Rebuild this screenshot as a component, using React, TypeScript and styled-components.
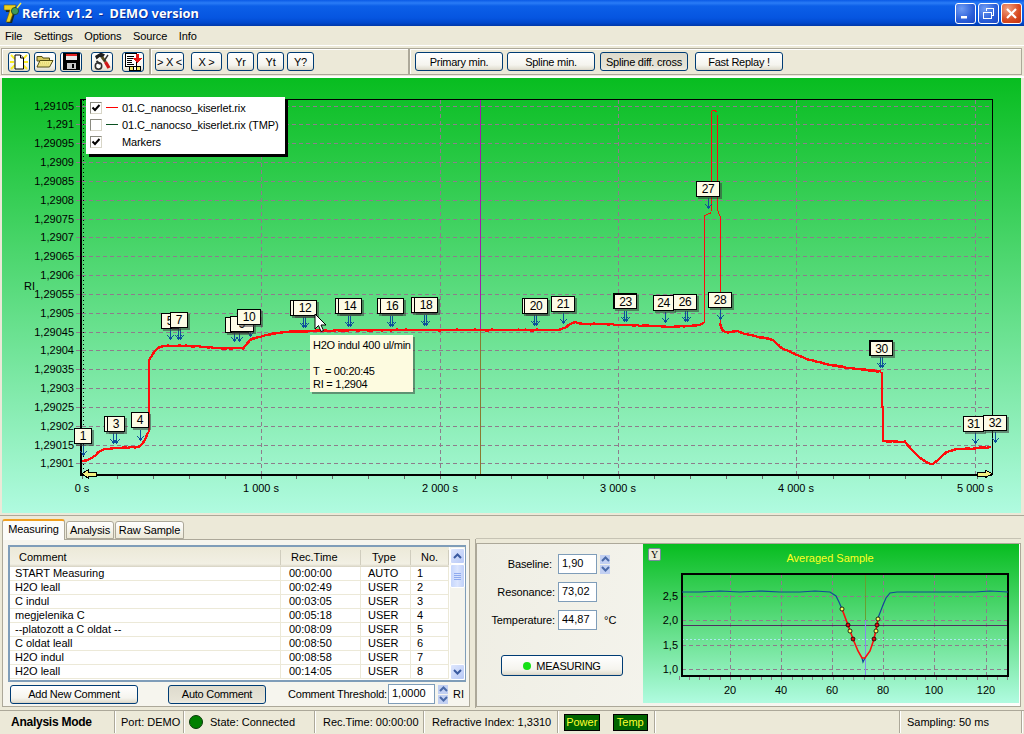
import styled, { createGlobalStyle } from "styled-components";

const UI_FONT = `"Liberation Sans", Arial, sans-serif`;

const GlobalStyle = createGlobalStyle`
  html, body { margin: 0; padding: 0; background: #ece9d8; }
  body { font-family: ${UI_FONT}; font-size: 11px; color: #000; }
  #root { width: 1024px; height: 734px; overflow: hidden; }
`;

const Window = styled.div`
  width: 1024px;
  height: 734px;
  display: flex;
  flex-direction: column;
  background: #ece9d8;
`;

/* ---------- title bar ---------- */
const TitleBar = styled.div`
  height: 26px;
  flex: none;
  display: flex;
  align-items: center;
  padding: 0 2px 0 2px;
  background: linear-gradient(#0a5ae6 0, #2a7cf6 3px, #0c5fe8 6px, #0655e0 18px, #0048cc 23px, #0038a8 26px);
`;

const TitleText = styled.div`
  margin-left: 0;
  flex: 1;
  color: #fff;
  font: bold 12.8px "Noto Sans", sans-serif;
  white-space: pre;
  text-shadow: 1px 1px 0 #0a2a90;
`;

const WinButton = styled.div<{ $close?: boolean }>`
  width: 21px;
  height: 21px;
  margin-left: 2px;
  box-sizing: border-box;
  border: 1px solid #fff;
  border-radius: 3px;
  display: flex;
  align-items: center;
  justify-content: center;
  background: ${(p) =>
    p.$close
      ? "radial-gradient(circle at 30% 25%, #f0a080, #d84a20 60%, #c03010)"
      : "radial-gradient(circle at 30% 25%, #6f9cf4, #2a5ed8 60%, #1c48c4)"};
`;

/* ---------- menu ---------- */
const MenuBar = styled.div`
  height: 19px;
  flex: none;
  display: flex;
  align-items: center;
  padding-left: 5px;
  gap: 11.5px;
`;

const MenuItem = styled.span`
  font-size: 11px;
  letter-spacing: -0.1px;
`;

/* ---------- toolbar ---------- */
const Toolbar = styled.div`
  height: 33px;
  flex: none;
  box-sizing: border-box;
  border-top: 1px solid #fff;
  border-bottom: 2px solid #fff;
  padding: 2px 2px 1px 1px;
  display: flex;
`;

const ToolGroup = styled.div<{ $w?: number; $pad?: number }>`
  box-sizing: border-box;
  width: ${(p) => (p.$w ? `${p.$w}px` : "auto")};
  flex: ${(p) => (p.$w ? "none" : "1")};
  height: 27px;
  border: 1px solid #aca899;
  box-shadow: inset 1px 1px 0 #fff;
  display: flex;
  align-items: center;
  padding-left: ${(p) => p.$pad ?? 6}px;
`;

const XpButton = styled.button<{ $w: number; $h?: number; $pressed?: boolean; $ml?: number }>`
  width: ${(p) => p.$w}px;
  height: ${(p) => p.$h ?? 19}px;
  margin: 0 0 0 ${(p) => p.$ml ?? 0}px;
  padding: 0;
  flex: none;
  box-sizing: border-box;
  border: 1px solid #003c74;
  border-radius: 3px;
  font: 11px ${UI_FONT};
  letter-spacing: -0.25px;
  color: #000;
  display: flex;
  align-items: center;
  justify-content: center;
  gap: 5px;
  background: ${(p) =>
    p.$pressed
      ? "linear-gradient(#dedbcd, #e6e3d6 80%, #eeece2)"
      : "linear-gradient(#fff, #f5f4ee 70%, #e4e1d4 92%, #d6d0c4)"};
`;

/* ---------- main chart ---------- */
const ChartPanel = styled.div`
  position: relative;
  height: 435px;
  flex: none;
  margin: 0 3px 0 2px;
  background: linear-gradient(#08bd20, #b0fbe0);
  overflow: hidden;
`;

const ChartSvg = styled.svg`
  display: block;
  width: 100%;
  height: 100%;
`;

const AxisText = styled.text`
  font: 11px ${UI_FONT};
  fill: #000;
`;

const Legend = styled.div`
  position: absolute;
  left: 84px;
  top: 19px;
  width: 199px;
  height: 57px;
  box-sizing: border-box;
  background: #fff;
  box-shadow: 3px 3px 0 #000;
  padding: 2px 0 0 4px;
  letter-spacing: -0.12px;
`;

const LegendRow = styled.div`
  height: 17px;
  display: flex;
  align-items: center;
`;

const CheckBox = styled.span`
  width: 12px;
  height: 12px;
  flex: none;
  box-sizing: border-box;
  border: 1px solid #8a8a80;
  border-right-color: #d8d6c8;
  border-bottom-color: #d8d6c8;
  background: #fff;
  display: flex;
  align-items: center;
  justify-content: center;
`;

const LegendLine = styled.span<{ $color?: string }>`
  width: 12px;
  height: 1px;
  flex: none;
  margin: 0 4px 0 4px;
  background: ${(p) => p.$color ?? "transparent"};
`;

const Marker = styled.div<{ $x: number; $y: number; $w: number; $bold?: boolean }>`
  position: absolute;
  left: ${(p) => p.$x - 2}px;
  top: ${(p) => p.$y - 78}px;
  width: ${(p) => p.$w}px;
  height: 16px;
  box-sizing: border-box;
  background: #fdfbe6;
  border: 1px solid #000;
  border-top-width: ${(p) => (p.$bold ? 2 : 1)}px;
  border-left-width: ${(p) => (p.$bold ? 2 : 1)}px;
  box-shadow: 2px 2px 0 rgba(60, 60, 60, 0.55);
  font: 12px/14px ${UI_FONT};
  letter-spacing: -0.3px;
  text-align: center;
  overflow: hidden;
`;

const Tooltip = styled.div`
  position: absolute;
  left: 308px;
  top: 257px;
  width: 103px;
  height: 57px;
  box-sizing: border-box;
  padding: 4px 0 0 3px;
  background: #fdfbe0;
  box-shadow: 2px 2px 0 rgba(60, 60, 60, 0.5);
  font: 11px/13px ${UI_FONT};
  letter-spacing: -0.25px;
  white-space: pre;
`;

const CursorIcon = styled.svg`
  position: absolute;
  left: 312px;
  top: 235px;
`;

/* ---------- bottom area ---------- */
const BottomArea = styled.div`
  height: 195px;
  flex: none;
  box-sizing: border-box;
  border-top: 1px solid #aca899;
  margin-top: 2px;
  padding: 2px 3px 0 2px;
  display: flex;
`;

const LeftColumn = styled.div`
  width: 468px;
  flex: none;
  display: flex;
  flex-direction: column;
`;

const TabStrip = styled.div`
  height: 21px;
  display: flex;
  align-items: flex-end;
  gap: 1px;
  position: relative;
  z-index: 1;
`;

const Tab = styled.div<{ $active?: boolean; $w: number }>`
  width: ${(p) => p.$w}px;
  height: ${(p) => (p.$active ? 21 : 18)}px;
  box-sizing: border-box;
  border: 1px solid #aca899;
  border-bottom: ${(p) => (p.$active ? "none" : "1px solid #aca899")};
  border-top: ${(p) => (p.$active ? "2px solid #f0a020" : "1px solid #aca899")};
  border-radius: 3px 3px 0 0;
  background: ${(p) => (p.$active ? "#fcfcfa" : "linear-gradient(#fff, #ece9d8)")};
  text-align: center;
  line-height: 16px;
  font-size: 11px;
  letter-spacing: -0.1px;
  margin-bottom: ${(p) => (p.$active ? -1 : 0)}px;
`;

const TabPane = styled.div`
  height: 168px;
  box-sizing: border-box;
  border: 1px solid #aca899;
  background: #f6f5ee;
  padding: 5px 3px 0 5px;
`;

const ListView = styled.div`
  height: 137px;
  width: 458px;
  box-sizing: border-box;
  border: 2px solid #7f9db9;
  background: #fff;
  display: flex;
`;

const ListBody = styled.div`
  width: 439px;
  flex: none;
`;

const ListColumns = "271px 80px 50px 38px";

const ListHeader = styled.div`
  height: 20px;
  display: grid;
  grid-template-columns: ${ListColumns};
  background: linear-gradient(#ece9d8, #f2f0e4 85%, #d6d2c2);
  align-items: center;
`;

const HeadCell = styled.div<{ $pad: number }>`
  padding-left: ${(p) => p.$pad}px;
  height: 15px;
  line-height: 15px;
  border-right: 1px solid #d0cdbe;
`;

const ListRow = styled.div`
  height: 14px;
  display: grid;
  grid-template-columns: ${ListColumns};
  box-sizing: border-box;
  border-bottom: 1px solid #ece9d8;
  line-height: 13px;
`;

const RowCell = styled.div<{ $pad: number }>`
  padding-left: ${(p) => p.$pad}px;
  border-right: 1px solid #ece9d8;
  white-space: nowrap;
`;

const ScrollBar = styled.div`
  width: 15px;
  margin-left: 1px;
  flex: none;
  background: #f4f3ec;
  display: flex;
  flex-direction: column;
  padding-top: 1px;
  box-sizing: border-box;
`;

const ScrollButton = styled.div`
  height: 16px;
  flex: none;
  box-sizing: border-box;
  border: 1px solid #fff;
  border-radius: 2px;
  background: linear-gradient(135deg, #dde6fd, #b8c9f6);
  display: flex;
  align-items: center;
  justify-content: center;
`;

const ScrollThumb = styled.div`
  height: 24px;
  flex: none;
  box-sizing: border-box;
  border: 1px solid #fff;
  border-radius: 2px;
  background: linear-gradient(90deg, #c6d6fc, #dbe5fe 50%, #c0d0f8);
  display: flex;
  flex-direction: column;
  align-items: center;
  justify-content: center;
  gap: 1px;
  margin-bottom: auto;
`;

const ThumbGrip = styled.span`
  width: 7px;
  height: 1px;
  background: #8eaaee;
`;

const CommentBar = styled.div`
  display: flex;
  align-items: center;
  height: 20px;
  margin-top: 2px;
  padding-left: 2px;
`;

const ThresholdLabel = styled.span`
  margin-left: 22px;
  width: 100px;
  flex: none;
  white-space: nowrap;
  letter-spacing: -0.2px;
`;

const NumberBox = styled.div<{ $w: number }>`
  width: ${(p) => p.$w}px;
  height: 20px;
  flex: none;
  box-sizing: border-box;
  border: 1px solid #7f9db9;
  background: #fff;
  line-height: 17px;
  padding-left: 3px;
`;

const Spinner = styled.div<{ $ml?: number }>`
  width: 10px;
  height: 19px;
  margin-left: ${(p) => p.$ml ?? 0}px;
  flex: none;
  display: flex;
  flex-direction: column;
  gap: 1px;
`;

const SpinPart = styled.div`
  flex: 1;
  background: #c2d0f2;
  display: flex;
  align-items: center;
  justify-content: center;
`;

const Splitter = styled.div`
  width: 6px;
  flex: none;
  box-sizing: border-box;
  border-right: 1px solid #aca899;
  margin-top: 21px;
  margin-bottom: 2px;
`;

const RightColumn = styled.div`
  flex: 1;
  min-width: 0;
  display: flex;
  flex-direction: column;
`;

const RightTop = styled.div`
  height: 21px;
  flex: none;
  box-sizing: border-box;
  border-bottom: 1px solid #c6c3b4;
`;

const MeasurePane = styled.div`
  margin-top: 4px;
  height: 164px;
  box-sizing: border-box;
  border: 1px solid #aca899;
  display: flex;
  background: linear-gradient(100deg, #efeee4, #fdfdfb);
`;

const FieldsPane = styled.div`
  width: 166px;
  flex: none;
  box-sizing: border-box;
  padding-top: 10px;
  display: flex;
  flex-direction: column;
  gap: 8px;
`;

const FieldRow = styled.div`
  display: grid;
  grid-template-columns: 78px 39px auto;
  column-gap: 3px;
  height: 20px;
  align-items: center;
`;

const FieldLabel = styled.span<{ $inset?: number }>`
  text-align: right;
  white-space: nowrap;
  letter-spacing: -0.1px;
  padding-right: ${(p) => p.$inset ?? 0}px;
`;

const Unit = styled.span<{ $pad?: number }>`
  padding-left: ${(p) => p.$pad ?? 4}px;
`;

const MeasureButtonSlot = styled.div`
  margin: 17px 0 0 24px;
`;

const Led = styled.span`
  width: 8px;
  height: 8px;
  border-radius: 50%;
  background: #16e016;
`;

const SampleChart = styled.div`
  position: relative;
  width: 376px;
  height: 159px;
  flex: none;
  background: linear-gradient(#08bd20, #b0fbe0);
`;

const YButton = styled.div`
  position: absolute;
  left: 5px;
  top: 4px;
  width: 13px;
  height: 13px;
  box-sizing: border-box;
  border: 1px solid #7a8aa0;
  border-radius: 2px;
  background: #ece9d8;
  font: 10px/11px "Liberation Serif", serif;
  text-align: center;
`;

/* ---------- status bar ---------- */
const StatusBar = styled.div`
  height: 24px;
  flex: none;
  box-sizing: border-box;
  border-top: 1px solid #aca899;
  padding: 0 2px 1px 2px;
  display: flex;
`;

const StatusCell = styled.div<{ $w?: number; $pad?: number; $bold?: boolean }>`
  width: ${(p) => (p.$w ? `${p.$w}px` : "auto")};
  flex: ${(p) => (p.$w ? "none" : "1")};
  box-sizing: border-box;
  border-right: 1px solid #aca899;
  box-shadow: 1px 0 0 #fff;
  display: flex;
  align-items: center;
  gap: ${(p) => (p.$bold ? 0 : 7)}px;
  padding-left: ${(p) => p.$pad ?? 6}px;
  white-space: nowrap;
  font-weight: ${(p) => (p.$bold ? "bold" : "normal")};
  font-size: ${(p) => (p.$bold ? 12 : 11)}px;
  letter-spacing: ${(p) => (p.$bold ? -0.25 : 0)}px;
`;

const StateDot = styled.span`
  width: 14px;
  height: 14px;
  box-sizing: border-box;
  border-radius: 50%;
  background: #008000;
  border: 1px solid #0a3a0a;
`;

const Lamp = styled.span`
  width: 39px;
  height: 17px;
  box-sizing: border-box;
  margin-right: 6px;
  border: 1px solid #000;
  background: #006400;
  color: #ffff30;
  text-align: center;
  line-height: 15px;
`;

/* ---------- data ---------- */
const GRID = "#8e7c8c";
const RED = "#ff0c0c";
const yLabels = [
  "1,29105", "1,291", "1,29095", "1,2909", "1,29085", "1,2908", "1,29075", "1,2907", "1,29065", "1,2906",
  "1,29055", "1,2905", "1,29045", "1,2904", "1,29035", "1,2903", "1,29025", "1,2902", "1,29015", "1,2901",
];
const yPos = (i: number) => Math.round(105.5 + i * 18.84);
const xGrid = [261, 440, 618, 796, 975];
const xLabels: [string, number][] = [
  ["0 s", 82], ["1 000 s", 261], ["2 000 s", 440], ["3 000 s", 618], ["4 000 s", 796], ["5 000 s", 975],
];

type P = [number, number];

const curveA: P[] = [
  [82, 461], [88, 460], [95, 456], [100, 451], [105, 449], [115, 448], [125, 447.5], [135, 447.5],
  [140, 446], [145, 440], [148, 432],
];
const curveB: P[] = [
  [149, 360], [151, 357], [155, 351], [160, 347], [165, 346], [180, 345.5], [190, 346], [205, 347], [225, 348.5],
  [243, 348.5], [246, 345], [250, 340], [258, 337], [270, 334.5], [285, 332], [310, 331], [340, 330.5], [400, 330],
  [480, 330], [558, 330], [565, 328], [570, 324], [575, 322], [582, 324], [600, 324], [625, 325], [650, 326],
  [670, 327], [690, 326], [700, 325], [704, 322],
];
const spike: P[] = [
  [704, 322], [704, 216], [708, 214], [711, 213], [712, 111], [714, 110], [717, 112], [717.5, 210], [720, 216], [720, 323],
];
const curveC: P[] = [
  [720, 323], [722, 330], [728, 332.5], [737, 331], [745, 334], [773, 340], [780, 347], [793, 353], [810, 360],
  [830, 365], [850, 368], [881, 371.5],
];
const curveD: P[] = [
  [882, 372], [882, 407], [883, 407], [883, 441], [905, 441.5], [912, 450], [920, 458], [928, 463], [933, 464],
  [940, 458], [947, 452], [955, 449.5], [975, 448.5], [991, 447],
];

// small measuring noise along the long stretches
const rough = (pts: P[]) => {
  const out: P[] = [];
  let n = 0;
  pts.forEach((p, i) => {
    out.push(p);
    const q = pts[i + 1];
    if (!q || q[0] - p[0] < 4) return;
    for (let x = p[0] + 3; x < q[0]; x += 3) {
      const t = (x - p[0]) / (q[0] - p[0]);
      const f = Math.sin(++n * 12.9898 + x) * 43758.5;
      out.push([x, p[1] + (q[1] - p[1]) * t + (f - Math.floor(f) - 0.5) * 0.9]);
    }
  });
  return out.map((p) => p.join(",")).join(" ");
};

const arrows: { x: number; y: number }[] = [
  { x: 83, y: 445 }, { x: 113, y: 433 }, { x: 116, y: 433 }, { x: 140, y: 430 },
  { x: 170, y: 329 }, { x: 178, y: 329 }, { x: 180, y: 329 }, { x: 234, y: 331 }, { x: 239, y: 331 }, { x: 250, y: 326 },
  { x: 303, y: 317 }, { x: 305, y: 317 }, { x: 348, y: 316 }, { x: 350, y: 316 }, { x: 390, y: 316 }, { x: 392, y: 316 },
  { x: 424, y: 315 }, { x: 426, y: 315 }, { x: 534, y: 315 }, { x: 536, y: 315 }, { x: 563, y: 313 }, { x: 624, y: 311 },
  { x: 626, y: 311 }, { x: 665, y: 312 }, { x: 685, y: 311 }, { x: 687, y: 311 }, { x: 708, y: 198 }, { x: 720, y: 309 },
  { x: 880, y: 357 }, { x: 882, y: 357 }, { x: 975, y: 433 }, { x: 995, y: 432 },
];

// the unnamed boxes are markers that lie almost fully under their neighbour
const markers: { id: string; n?: string; x: number; y: number; w?: number; bold?: boolean }[] = [
  { id: "1", n: "1", x: 74, y: 428, w: 18 },
  { id: "2", x: 104, y: 416, w: 18 },
  { id: "3", n: "3", x: 107, y: 416, w: 18 },
  { id: "4", n: "4", x: 131, y: 412, w: 18 },
  { id: "5", n: "5", x: 161, y: 313, w: 18 },
  { id: "7", n: "7", x: 170, y: 312, w: 18 },
  { id: "8", x: 225, y: 317, w: 24 },
  { id: "9", n: "9", x: 230, y: 316, w: 24 },
  { id: "10", n: "10", x: 237, y: 309 },
  { id: "11", x: 290, y: 300 },
  { id: "12", n: "12", x: 293, y: 300 },
  { id: "13", x: 335, y: 298 },
  { id: "14", n: "14", x: 338, y: 298 },
  { id: "15", x: 377, y: 298 },
  { id: "16", n: "16", x: 380, y: 298 },
  { id: "17", x: 411, y: 297 },
  { id: "18", n: "18", x: 414, y: 297 },
  { id: "19", x: 522, y: 298 },
  { id: "20", n: "20", x: 524, y: 298 },
  { id: "21", n: "21", x: 551, y: 296 },
  { id: "23", n: "23", x: 613, y: 293, bold: true },
  { id: "24", n: "24", x: 653, y: 295, w: 21 },
  { id: "26", n: "26", x: 673, y: 294 },
  { id: "27", n: "27", x: 696, y: 181 },
  { id: "28", n: "28", x: 708, y: 292 },
  { id: "30", n: "30", x: 869, y: 340, bold: true },
  { id: "31", n: "31", x: 963, y: 416, w: 21 },
  { id: "32", n: "32", x: 983, y: 415 },
];

const comments = [
  ["START Measuring", "00:00:00", "AUTO", "1"],
  ["H2O leall", "00:02:49", "USER", "2"],
  ["C indul", "00:03:05", "USER", "3"],
  ["megjelenika C", "00:05:18", "USER", "4"],
  ["--platozott a C oldat --", "00:08:09", "USER", "5"],
  ["C oldat leall", "00:08:50", "USER", "6"],
  ["H2O indul", "00:08:58", "USER", "7"],
  ["H2O leall", "00:14:05", "USER", "8"],
];

const sampleLeft: P[] = [
  [682, 592], [700, 592], [720, 591], [740, 592], [760, 591], [780, 592], [800, 592], [815, 591], [830, 592],
  [836, 596], [839, 602], [842, 609],
];
const sampleRed: P[] = [
  [842, 609], [848, 625], [853, 639], [858, 651], [862, 658], [865, 658], [870, 651], [874, 639], [877, 625], [878, 618],
];
const sampleRight: P[] = [
  [878, 618], [883, 605], [886, 598], [890, 593], [897, 592], [920, 592], [950, 592], [975, 592], [990, 591], [1008, 592],
];

const pts = (list: P[]) => list.map((p) => p.join(",")).join(" ");

/* ---------- drawings ---------- */
const Check = () => (
  <svg width="10" height="10" viewBox="0 0 10 10">
    <path d="M1.5 4.5 L4 7 L8.5 2" fill="none" stroke="#000" strokeWidth="2" />
  </svg>
);

const Arrow = ({ up, color = "#3a5aa0" }: { up?: boolean; color?: string }) => (
  <svg width="9" height="6" viewBox="0 0 9 6">
    <path d={up ? "M1 5 L4.5 1.5 L8 5" : "M1 1 L4.5 4.5 L8 1"} fill="none" stroke={color} strokeWidth="2" />
  </svg>
);

const AppLogo = () => (
  <svg width="20" height="22" viewBox="0 0 20 22">
    <path d="M2 4 H14 L9 20 H4 L8 9 H3 Z" fill="#1a2a20" transform="translate(1,1)" />
    <path d="M2 3 H14 L8 20 H4 L8 8 H2 Z" fill="#ecd020" stroke="#6a5a10" strokeWidth="0.6" />
    <circle cx="13" cy="9" r="3.6" fill="#3c9a58" stroke="#1c402a" strokeWidth="0.8" />
    <path d="M15 6 L19 1" stroke="#f8ec50" strokeWidth="1.5" />
  </svg>
);

const NewIcon = () => (
  <svg width="18" height="18" viewBox="0 0 18 18">
    <path d="M1 2 L5 6 M1 16 L5 12 M17 2 L13 6 M17 16 L13 12 M0 9 H4 M14 9 H18" stroke="#f8ec20" strokeWidth="1.8" />
    <path d="M5 2 H10.5 L13.5 5 V16 H5 Z" fill="#fff" stroke="#000" />
    <path d="M10.5 2 V5 H13.5" fill="#d8d8d8" stroke="#000" />
  </svg>
);

const OpenIcon = () => (
  <svg width="18" height="15" viewBox="0 0 18 15">
    <path d="M1 2.5 H6 L7 4 H13.5 V7 H1 Z" fill="#d8c860" stroke="#504c10" />
    <path d="M1 13 L4 6.5 H17 L13.5 13 Z" fill="#f4ea90" stroke="#504c10" />
    <path d="M4 9 H14 M3.5 11 H13" stroke="#d8c860" strokeDasharray="1 1" />
  </svg>
);

const SaveIcon = () => (
  <svg width="17" height="17" viewBox="0 0 17 17" shapeRendering="crispEdges">
    <rect x="0" y="0" width="17" height="17" rx="1" fill="#000" />
    <rect x="3" y="1" width="11" height="6" fill="#e8e8e8" />
    <rect x="3" y="1" width="11" height="2" fill="#e02020" />
    <rect x="4" y="10" width="9" height="6" fill="#c8c8c8" />
    <rect x="9" y="11" width="2" height="4" fill="#000" />
  </svg>
);

const ToolsIcon = () => (
  <svg width="19" height="19" viewBox="0 0 19 19">
    <path d="M2 4 L8 0.5 L12 2.5 L9.5 6 L6.5 5 L3.5 7.5 Z" fill="#202020" />
    <path d="M9 5 L12.5 10" stroke="#5a5020" strokeWidth="3" />
    <path d="M12.5 10 L16 16" stroke="#d01818" strokeWidth="3.4" />
    <circle cx="5.5" cy="14" r="3.2" fill="#fff" stroke="#303030" strokeWidth="1.6" />
    <path d="M3.5 9 L7 12" stroke="#303030" strokeWidth="2" />
    <path d="M11 9 L15 3" stroke="#303030" strokeWidth="1.4" />
  </svg>
);

const ReportIcon = () => (
  <svg width="19" height="19" viewBox="0 0 19 19" shapeRendering="crispEdges">
    <rect x="1" y="1" width="11" height="13" fill="#fff" stroke="#000" />
    <path d="M3 4 H10 M3 6 H10 M3 8 H8 M3 10 H8 M3 12 H10" stroke="#000" />
    <rect x="5" y="14" width="11" height="4" fill="#f4e860" stroke="#000" />
    <rect x="9" y="14" width="3" height="4" fill="#fff" stroke="#000" />
    <path d="M12 2 H15 V6 H18 L13.5 11 L9 6 H12 Z" fill="#e81818" />
  </svg>
);

const Cursor = () => (
  <CursorIcon width="14" height="20" viewBox="0 0 14 20">
    <path d="M1 1 V16 L4.5 12.5 L7 18.5 L9.5 17.5 L7 12 H12 Z" fill="#fff" stroke="#000" strokeWidth="1" />
  </CursorIcon>
);

/* ---------- app ---------- */
function MainChart() {
  return (
    <ChartSvg viewBox="2 78 1019 435" shapeRendering="crispEdges">
      {yLabels.map((l, i) => (
        <g key={l}>
          <line x1="82" x2="992" y1={yPos(i)} y2={yPos(i)} stroke={GRID} strokeDasharray="4 3" />
          <line x1="76" x2="80" y1={yPos(i)} y2={yPos(i)} stroke={GRID} />
          <AxisText x="74" y={yPos(i) + 4} textAnchor="end">
            {l}
          </AxisText>
        </g>
      ))}
      <AxisText x="24" y="290">RI</AxisText>
      {xGrid.map((x) => (
        <line key={x} x1={x} x2={x} y1="100" y2="474" stroke={GRID} strokeDasharray="4 3" />
      ))}
      {Array.from({ length: 26 }, (_, i) => 82 + i * 35.8).map((x) => (
        <line key={x} x1={x} x2={x} y1="474" y2="479" stroke="#6a6a6a" />
      ))}
      {xLabels.map(([l, x]) => (
        <AxisText key={l} x={x} y="492" textAnchor="middle">
          {l}
        </AxisText>
      ))}
      <line x1="480.5" x2="480.5" y1="100" y2="330" stroke="#a01ea8" />
      <line x1="480.5" x2="480.5" y1="330" y2="474" stroke="#8a7a30" />
      <rect x="80" y="99" width="912" height="375" fill="none" stroke="#000" />
      <line x1="81" x2="81" y1="99" y2="476" stroke="#000" strokeWidth="2" />
      <line x1="83.5" x2="83.5" y1="100" y2="474" stroke="#000" strokeDasharray="1 3" />
      <line x1="80" x2="992" y1="474.5" y2="474.5" stroke="#000" strokeWidth="2" />
      <polyline points={rough(curveA)} fill="none" stroke={RED} strokeWidth="2.4" />
      <line x1="148.5" x2="148.5" y1="360" y2="432" stroke={RED} strokeWidth="2" />
      <polyline points={rough(curveB)} fill="none" stroke={RED} strokeWidth="2.4" />
      <polyline points={pts(spike)} fill="none" stroke={RED} strokeWidth="1" />
      <polyline points={rough(curveC)} fill="none" stroke={RED} strokeWidth="2.4" />
      <polyline points={rough(curveD)} fill="none" stroke={RED} strokeWidth="2.4" />
      {arrows.map((a) => (
        <path
          key={`${a.x}-${a.y}`}
          d={`M${a.x + 0.5} ${a.y} V${a.y + 10} M${a.x - 3} ${a.y + 6} L${a.x + 0.5} ${a.y + 10} L${a.x + 4} ${a.y + 6}`}
          fill="none"
          stroke="#0c4f9a"
          strokeWidth="1"
        />
      ))}
      <path d="M82 474.5 L88 471 V473 H96 V477 H88 V479 Z" transform="translate(0,-1)" fill="#f4f080" stroke="#000" />
      <path d="M992 474.5 L985 471 V473 H977 V477 H985 V479 Z" transform="translate(0,-1)" fill="#f4f080" stroke="#000" />
    </ChartSvg>
  );
}

function SamplePlot() {
  const grid = [730, 781, 832, 883, 934, 986];
  const rows: [string, number][] = [["2,5", 596], ["2,0", 620], ["1,5", 645], ["1,0", 669]];
  return (
    <ChartSvg viewBox="643 544 376 159" shapeRendering="crispEdges">
      <text x="830" y="562" textAnchor="middle" fill="#ffff20" fontSize="11" fontFamily="Liberation Sans">
        Averaged Sample
      </text>
      {rows.map(([l, y]) => (
        <g key={l}>
          <line x1="682" x2="1008" y1={y} y2={y} stroke={GRID} strokeDasharray="4 3" />
          <AxisText x="678" y={y + 4} textAnchor="end">
            {l}
          </AxisText>
        </g>
      ))}
      {grid.map((x, i) => (
        <g key={x}>
          <line x1={x} x2={x} y1="574" y2="676" stroke={GRID} strokeDasharray="4 3" />
          <AxisText x={x} y="694" textAnchor="middle">
            {(i + 1) * 20}
          </AxisText>
        </g>
      ))}
      {Array.from({ length: 33 }, (_, i) => 679 + i * 10.28).map((x) => (
        <line key={x} x1={x} x2={x} y1="676" y2="680" stroke={GRID} />
      ))}
      <line x1="682" x2="1008" y1="625.5" y2="625.5" stroke="#503060" />
      <line x1="682" x2="1008" y1="639.5" y2="639.5" stroke="#a8ecec" strokeDasharray="2 2" />
      <line x1="865.5" x2="865.5" y1="574" y2="620" stroke="#68a030" />
      <line x1="865.5" x2="865.5" y1="620" y2="676" stroke="#8888ee" />
      <rect x="682" y="574" width="326" height="102" fill="none" stroke="#000" strokeWidth="2" />
      <g shapeRendering="auto">
        <polyline points={pts(sampleLeft)} fill="none" stroke="#104a98" strokeWidth="1.2" />
        <polyline points={pts(sampleRight)} fill="none" stroke="#104a98" strokeWidth="1.2" />
        <polyline points="862,658 863,662 865,658" fill="none" stroke="#104a98" strokeWidth="1.2" />
        <polyline points={pts(sampleRed)} fill="none" stroke={RED} strokeWidth="1.6" />
        {[[842, 609], [850, 631], [876, 631], [878, 619]].map(([x, y]) => (
          <circle key={x} cx={x} cy={y} r="2" fill="#ffff60" stroke="#000" strokeWidth="0.8" />
        ))}
        {[[848, 625], [853, 639], [874, 639], [877, 625]].map(([x, y]) => (
          <circle key={x} cx={x} cy={y} r="2" fill="#e01010" stroke="#000" strokeWidth="0.8" />
        ))}
      </g>
    </ChartSvg>
  );
}

function App() {
  return (
    <Window>
      <GlobalStyle />
      <TitleBar>
        <AppLogo />
        <TitleText>{"Refrix  v1.2  -  DEMO version"}</TitleText>
        <WinButton>
          <svg width="11" height="11" viewBox="0 0 11 11">
            <rect x="1" y="8" width="6" height="2.5" fill="#fff" />
          </svg>
        </WinButton>
        <WinButton>
          <svg width="13" height="13" viewBox="0 0 13 13" shapeRendering="crispEdges">
            <path d="M4.5 3.5 V1.5 H11.5 V8 H9 M1.5 5 H9 V11.5 H1.5 Z M1.5 5.5 H9" fill="none" stroke="#fff" />
          </svg>
        </WinButton>
        <WinButton $close>
          <svg width="13" height="13" viewBox="0 0 13 13">
            <path d="M2 2 L11 11 M11 2 L2 11" stroke="#fff" strokeWidth="2.2" />
          </svg>
        </WinButton>
      </TitleBar>

      <MenuBar>
        {["File", "Settings", "Options", "Source", "Info"].map((m) => (
          <MenuItem key={m}>{m}</MenuItem>
        ))}
      </MenuBar>

      <Toolbar>
        <ToolGroup $w={149}>
          <XpButton $w={22} $h={20}><NewIcon /></XpButton>
          <XpButton $w={22} $h={20} $ml={4}><OpenIcon /></XpButton>
          <XpButton $w={22} $h={20} $ml={4}><SaveIcon /></XpButton>
          <XpButton $w={22} $h={20} $ml={9}><ToolsIcon /></XpButton>
          <XpButton $w={22} $h={20} $ml={9}><ReportIcon /></XpButton>
        </ToolGroup>
        <ToolGroup $w={259} $pad={4}>
          <XpButton $w={29}>{"> X <"}</XpButton>
          <XpButton $w={31} $ml={7}>{"X >"}</XpButton>
          <XpButton $w={27} $ml={5}>Yr</XpButton>
          <XpButton $w={27} $ml={3}>Yt</XpButton>
          <XpButton $w={27} $ml={3}>Y?</XpButton>
        </ToolGroup>
        <ToolGroup $pad={5}>
          <XpButton $w={88}>Primary min.</XpButton>
          <XpButton $w={88} $ml={4}>Spline min.</XpButton>
          <XpButton $w={88} $ml={5} $pressed>Spline diff. cross</XpButton>
          <XpButton $w={88} $ml={7}>Fast Replay !</XpButton>
        </ToolGroup>
      </Toolbar>

      <ChartPanel>
        <MainChart />
        <Legend>
          <LegendRow>
            <CheckBox><Check /></CheckBox>
            <LegendLine $color="#ff0000" />
            01.C_nanocso_kiserlet.rix
          </LegendRow>
          <LegendRow>
            <CheckBox />
            <LegendLine $color="#0a5020" />
            01.C_nanocso_kiserlet.rix (TMP)
          </LegendRow>
          <LegendRow>
            <CheckBox><Check /></CheckBox>
            <LegendLine />
            Markers
          </LegendRow>
        </Legend>
        {markers.map((m) => (
          <Marker key={m.id} $x={m.x} $y={m.y} $w={m.w ?? 24} $bold={m.bold}>
            {m.n}
          </Marker>
        ))}
        <Tooltip>{"H2O indul 400 ul/min\n\nT  = 00:20:45\nRI = 1,2904"}</Tooltip>
        <Cursor />
      </ChartPanel>

      <BottomArea>
        <LeftColumn>
          <TabStrip>
            <Tab $active $w={63}>Measuring</Tab>
            <Tab $w={48}>Analysis</Tab>
            <Tab $w={69}>Raw Sample</Tab>
          </TabStrip>
          <TabPane>
            <ListView>
              <ListBody>
                <ListHeader>
                  <HeadCell $pad={9}>Comment</HeadCell>
                  <HeadCell $pad={10}>Rec.Time</HeadCell>
                  <HeadCell $pad={11}>Type</HeadCell>
                  <HeadCell $pad={10}>No.</HeadCell>
                </ListHeader>
                {comments.map((c) => (
                  <ListRow key={c[3]}>
                    <RowCell $pad={5}>{c[0]}</RowCell>
                    <RowCell $pad={8}>{c[1]}</RowCell>
                    <RowCell $pad={7}>{c[2]}</RowCell>
                    <RowCell $pad={6}>{c[3]}</RowCell>
                  </ListRow>
                ))}
              </ListBody>
              <ScrollBar>
                <ScrollButton><Arrow up /></ScrollButton>
                <ScrollThumb>
                  <ThumbGrip />
                  <ThumbGrip />
                  <ThumbGrip />
                  <ThumbGrip />
                </ScrollThumb>
                <ScrollButton><Arrow /></ScrollButton>
              </ScrollBar>
            </ListView>
            <CommentBar>
              <XpButton $w={128}>Add New Comment</XpButton>
              <XpButton $w={98} $ml={30} $pressed>Auto Comment</XpButton>
              <ThresholdLabel>Comment Threshold:</ThresholdLabel>
              <NumberBox $w={47}>1,0000</NumberBox>
              <Spinner $ml={3}>
                <SpinPart><Arrow up color="#4a6aa8" /></SpinPart>
                <SpinPart><Arrow color="#4a6aa8" /></SpinPart>
              </Spinner>
              <Unit $pad={5}>RI</Unit>
            </CommentBar>
          </TabPane>
        </LeftColumn>
        <Splitter />
        <RightColumn>
          <RightTop />
          <MeasurePane>
            <FieldsPane>
              <FieldRow>
                <FieldLabel $inset={3}>Baseline:</FieldLabel>
                <NumberBox $w={39}>1,90</NumberBox>
                <Spinner>
                  <SpinPart><Arrow up color="#4a6aa8" /></SpinPart>
                  <SpinPart><Arrow color="#4a6aa8" /></SpinPart>
                </Spinner>
              </FieldRow>
              <FieldRow>
                <FieldLabel>Resonance:</FieldLabel>
                <NumberBox $w={39}>73,02</NumberBox>
              </FieldRow>
              <FieldRow>
                <FieldLabel>Temperature:</FieldLabel>
                <NumberBox $w={39}>44,87</NumberBox>
                <Unit>°C</Unit>
              </FieldRow>
              <MeasureButtonSlot>
                <XpButton $w={122} $h={21}>
                  <Led />
                  MEASURING
                </XpButton>
              </MeasureButtonSlot>
            </FieldsPane>
            <SampleChart>
              <SamplePlot />
              <YButton>Y</YButton>
            </SampleChart>
          </MeasurePane>
        </RightColumn>
      </BottomArea>

      <StatusBar>
        <StatusCell $w={113} $pad={9} $bold>Analysis Mode</StatusCell>
        <StatusCell $w={69}>Port: DEMO</StatusCell>
        <StatusCell $w={131} $pad={5}>
          <StateDot />
          State: Connected
        </StatusCell>
        <StatusCell $w={109} $pad={8}>Rec.Time: 00:00:00</StatusCell>
        <StatusCell $w={134} $pad={8}>Refractive Index: 1,3310</StatusCell>
        <StatusCell $w={97}>
          <Lamp>Power</Lamp>
          <Lamp>Temp</Lamp>
        </StatusCell>
        <StatusCell />
        <StatusCell $w={122} $pad={7}>Sampling: 50 ms</StatusCell>
      </StatusBar>
    </Window>
  );
}

export default App;
